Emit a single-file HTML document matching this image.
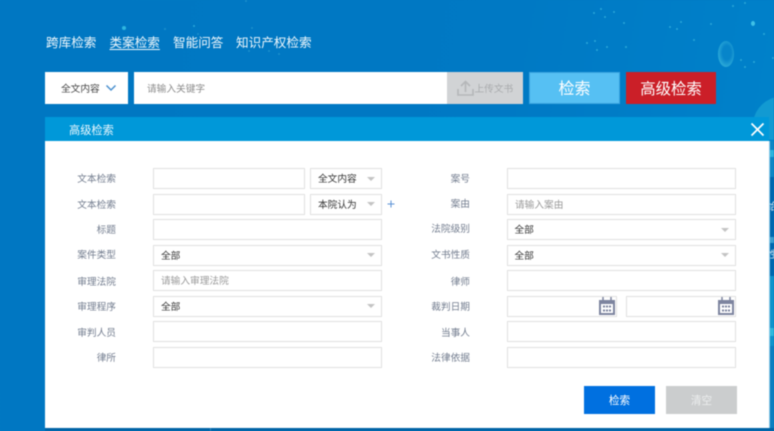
<!DOCTYPE html>
<html lang="zh">
<head>
<meta charset="utf-8">
<style>
html,body{margin:0;padding:0;width:774px;height:431px;overflow:hidden;background:#0079c4}
body{font-family:"Liberation Sans","Noto Sans CJK SC",sans-serif;position:relative}
#w{position:absolute;left:0;top:0;width:774px;height:431px;overflow:hidden;filter:blur(.45px);background:linear-gradient(100deg,#0077c2 0%,#0079c4 60%,#0083cb 100%)}
.a{position:absolute;white-space:nowrap}
.nav{color:#eef7fc;font-size:12.6px;line-height:16px;top:35px}
.f{position:absolute;box-sizing:border-box;background:#fff;border:1px solid #e0e0e0;height:21px}
.l{position:absolute;font-size:9.7px;line-height:14px;color:#737d8f;text-align:right;white-space:nowrap}
.v{position:absolute;font-size:9.7px;line-height:14px;color:#333;white-space:nowrap}
.p{color:#999}
.t{position:absolute;width:0;height:0;border-left:4px solid transparent;border-right:4px solid transparent;border-top:4px solid #c4c4c4}
.d{position:absolute;width:2px;height:2px;border-radius:50%;background:#2aa6d8}
</style>
</head>
<body>
<div id="w">
<!-- background dots -->
<div class="d" style="left:122px;top:26px;width:4px;height:4px;background:#2fb6e0"></div>
<div class="d" style="left:164px;top:28px;background:#1b8fcb"></div>
<div class="d" style="left:193px;top:25px"></div>
<div class="d" style="left:197px;top:33px;background:#1b8fcb"></div>
<div class="d" style="left:251px;top:27px;background:#1b8fcb"></div>
<div class="d" style="left:245px;top:0px;background:#1b8fcb"></div>
<div class="d" style="left:248px;top:50px;background:#1b8fcb"></div>
<div class="d" style="left:268px;top:50px;background:#1b8fcb"></div>
<div class="d" style="left:278px;top:53px;background:#1b8fcb"></div>
<div class="d" style="left:593px;top:12px"></div>
<div class="d" style="left:600px;top:8px"></div>
<div class="d" style="left:604px;top:16px"></div>
<div class="d" style="left:613px;top:11px"></div>
<div class="d" style="left:623px;top:22px"></div>
<div class="d" style="left:669px;top:26px"></div>
<div class="d" style="left:680px;top:21px"></div>
<div class="d" style="left:676px;top:28px"></div>
<div class="d" style="left:710px;top:23px"></div>
<div class="d" style="left:586px;top:42px"></div>
<div class="d" style="left:594px;top:40px"></div>
<div class="d" style="left:596px;top:49px"></div>
<div class="d" style="left:606px;top:46px"></div>
<div class="d" style="left:625px;top:46px"></div>
<div class="d" style="left:693px;top:39px"></div>
<div class="d" style="left:732px;top:5px"></div>
<div class="d" style="left:744px;top:2px"></div>
<div class="d" style="left:751px;top:21px;width:4px;height:5px;background:#3fc0e6"></div>
<div class="d" style="left:763px;top:33px"></div>
<div class="d" style="left:740px;top:59px"></div>
<div class="d" style="left:753px;top:61px"></div>
<div class="d" style="left:744px;top:66px"></div>
<div class="d" style="left:772px;top:57px"></div>
<div class="a" style="left:718px;top:41px;width:16px;height:26px;border-radius:50%;box-sizing:border-box;background:radial-gradient(ellipse at 55% 45%,rgba(60,170,215,.12) 35%,rgba(70,195,225,.75) 80%,rgba(70,195,225,0) 100%)"></div>
<div class="a" style="left:752px;top:98px;width:50px;height:40px;border-radius:50%;background:#129ad2;transform:rotate(-35deg)"></div>

<!-- nav -->
<div class="a nav" style="left:46px">跨库检索</div>
<div class="a nav" style="left:109.5px;text-decoration:underline;text-underline-offset:2px">类案检索</div>
<div class="a nav" style="left:173px">智能问答</div>
<div class="a nav" style="left:236px">知识产权检索</div>

<!-- search bar -->
<div class="a" style="left:45px;top:72px;width:83px;height:32px;background:#fff"></div>
<div class="a" style="left:61px;top:82.5px;font-size:9.7px;line-height:14px;color:#444">全文内容</div>
<svg class="a" style="left:105px;top:84px" width="12" height="8" viewBox="0 0 12 8"><path d="M1.5 1.5 L6 6 L10.5 1.5" fill="none" stroke="#4a90cf" stroke-width="1.5"/></svg>
<div class="a" style="left:134px;top:72px;width:313px;height:32px;background:#fff"></div>
<div class="a" style="left:147px;top:82.5px;font-size:9.7px;line-height:14px;color:#8c8c8c">请输入关键字</div>
<div class="a" style="left:447px;top:72px;width:76px;height:32px;background:#d1d3d5"></div>
<svg class="a" style="left:457px;top:80px" width="17" height="17" viewBox="0 0 17 17"><path d="M8.5 12 V2 M4 6 L8.5 1.5 L13 6 M1 9 V15 H16 V9" fill="none" stroke="#b5b7b9" stroke-width="1.6"/></svg>
<div class="a" style="left:474.5px;top:82.5px;font-size:9.7px;line-height:14px;color:#a9abad">上传文书</div>
<div class="a" style="left:529px;top:72px;width:91px;height:32px;box-sizing:border-box;background:#56c0f3;border:1px solid #3aa4e0;color:#fff;font-size:16px;line-height:33px;text-align:center">检索</div>
<div class="a" style="left:626px;top:72px;width:90px;height:32px;background:#cb1f28;color:#fff;font-size:15.4px;line-height:35px;text-align:center">高级检索</div>

<!-- right strip behind modal -->
<div class="a" style="left:769px;top:141px;width:5px;height:290px;background:#0e86c4"></div>
<div class="a" style="left:769px;top:150px;width:5px;height:7px;background:#2db3dc"></div>
<div class="a" style="left:769px;top:177px;width:5px;height:60px;background:#0067ae"></div>
<div class="a" style="left:769px;top:237px;width:5px;height:6px;background:#3a9fd0"></div>
<div class="a" style="left:769px;top:243px;width:5px;height:33px;background:#0067ae"></div>
<div class="a" style="left:769px;top:276px;width:5px;height:70px;background:#0f93cb"></div>
<div class="a" style="left:769px;top:328px;width:5px;height:8px;background:#2fb8dc"></div>
<div class="a" style="left:769px;top:346px;width:5px;height:85px;background:#0c7fc0"></div>
<div class="a" style="left:767px;top:202px;font-size:10px;line-height:12px;color:#cfe4f2">给</div>
<div class="a" style="left:767px;top:250px;font-size:10px;line-height:12px;color:#cfe4f2">性</div>

<!-- modal -->
<div class="a" style="left:45px;top:117px;width:724px;height:24px;background:#0098d9"></div>
<div class="a" style="left:69px;top:123px;font-size:11.2px;line-height:16px;color:#eaf7fd">高级检索</div>
<svg class="a" style="left:750px;top:122px" width="15" height="15" viewBox="0 0 15 15"><path d="M1.5 1.5 L13.5 13.5 M13.5 1.5 L1.5 13.5" stroke="#fff" stroke-width="1.7" fill="none"/></svg>
<div class="a" style="left:45px;top:141px;width:724px;height:287px;background:#fff;box-shadow:1px 0 0 #8fcbe8"></div>
<div class="a" style="left:45px;top:428px;width:729px;height:3px;background:#0063a6"></div>
<div class="a" style="left:210px;top:428px;width:1px;height:3px;background:#2b83bd"></div>

<!-- left labels -->
<div class="l" style="left:57px;width:59px;top:173px">文本检索</div>
<div class="l" style="left:57px;width:59px;top:198.5px">文本检索</div>
<div class="l" style="left:57px;width:59px;top:224px">标题</div>
<div class="l" style="left:57px;width:59px;top:249px">案件类型</div>
<div class="l" style="left:57px;width:59px;top:275.5px">审理法院</div>
<div class="l" style="left:57px;width:59px;top:301px">审理程序</div>
<div class="l" style="left:57px;width:59px;top:326.5px">审判人员</div>
<div class="l" style="left:57px;width:59px;top:352px">律所</div>

<!-- left fields -->
<div class="f" style="left:153px;top:168px;width:152px"></div>
<div class="f" style="left:310px;top:168px;width:72px"></div>
<div class="v" style="left:318px;top:173px">全文内容</div>
<div class="t" style="left:367px;top:177px"></div>
<div class="f" style="left:153px;top:194px;width:152px"></div>
<div class="f" style="left:310px;top:194px;width:72px"></div>
<div class="v" style="left:318px;top:199px">本院认为</div>
<div class="t" style="left:367px;top:202px"></div>
<svg class="a" style="left:387px;top:200px" width="8" height="8" viewBox="0 0 8 8"><path d="M4 .5 V7.5 M.5 4 H7.5" stroke="#5b92d6" stroke-width="1" fill="none"/></svg>
<div class="f" style="left:153px;top:219px;width:229px"></div>
<div class="f" style="left:153px;top:245px;width:229px"></div>
<div class="v" style="left:161px;top:250px">全部</div>
<div class="t" style="left:367px;top:253px"></div>
<div class="f" style="left:153px;top:270px;width:229px"></div>
<div class="v p" style="left:161px;top:275px">请输入审理法院</div>
<div class="f" style="left:153px;top:296px;width:229px"></div>
<div class="v" style="left:161px;top:301px">全部</div>
<div class="t" style="left:367px;top:304px"></div>
<div class="f" style="left:153px;top:321px;width:229px"></div>
<div class="f" style="left:153px;top:347px;width:229px"></div>

<!-- right labels -->
<div class="l" style="left:411px;width:59px;top:173px">案号</div>
<div class="l" style="left:411px;width:59px;top:198px">案由</div>
<div class="l" style="left:411px;width:59px;top:223px">法院级别</div>
<div class="l" style="left:411px;width:59px;top:249px">文书性质</div>
<div class="l" style="left:411px;width:59px;top:275.5px">律师</div>
<div class="l" style="left:411px;width:59px;top:301px">裁判日期</div>
<div class="l" style="left:411px;width:59px;top:326.5px">当事人</div>
<div class="l" style="left:411px;width:59px;top:352px">法律依据</div>

<!-- right fields -->
<div class="f" style="left:507px;top:168px;width:229px"></div>
<div class="f" style="left:507px;top:194px;width:229px"></div>
<div class="v p" style="left:515px;top:199px">请输入案由</div>
<div class="f" style="left:507px;top:219px;width:229px"></div>
<div class="v" style="left:514.5px;top:224px">全部</div>
<div class="t" style="left:721px;top:228px"></div>
<div class="f" style="left:507px;top:245px;width:229px"></div>
<div class="v" style="left:514.5px;top:250px">全部</div>
<div class="t" style="left:721px;top:253px"></div>
<div class="f" style="left:507px;top:270px;width:229px"></div>
<div class="f" style="left:507px;top:296px;width:110px"></div>
<div class="f" style="left:626px;top:296px;width:110px"></div>
<svg class="a" style="left:598px;top:296px" width="18" height="20" viewBox="0 0 18 20"><path d="M1 4 H17 V19 H1 Z" fill="#7d849f"/><rect x="3" y="8" width="12" height="9" fill="#fff"/><path d="M5 1 V5 M13 1 V5" stroke="#7d849f" stroke-width="1.5"/><path d="M5 10.5 H13 M5 14.5 H13" stroke="#7d849f" stroke-width="2" stroke-dasharray="2 1"/></svg>
<svg class="a" style="left:717px;top:296px" width="18" height="20" viewBox="0 0 18 20"><path d="M1 4 H17 V19 H1 Z" fill="#7d849f"/><rect x="3" y="8" width="12" height="9" fill="#fff"/><path d="M5 1 V5 M13 1 V5" stroke="#7d849f" stroke-width="1.5"/><path d="M5 10.5 H13 M5 14.5 H13" stroke="#7d849f" stroke-width="2" stroke-dasharray="2 1"/></svg>
<div class="f" style="left:507px;top:321px;width:229px"></div>
<div class="f" style="left:507px;top:347px;width:229px"></div>

<!-- buttons -->
<div class="a" style="left:584px;top:386px;width:71px;height:28px;background:#0070e0;color:#fff;font-size:10.6px;line-height:30px;text-align:center">检索</div>
<div class="a" style="left:666px;top:386px;width:71px;height:28px;background:#cbcdce;color:#eceeee;font-size:10.6px;line-height:30px;text-align:center">清空</div>
</div>
</body>
</html>
